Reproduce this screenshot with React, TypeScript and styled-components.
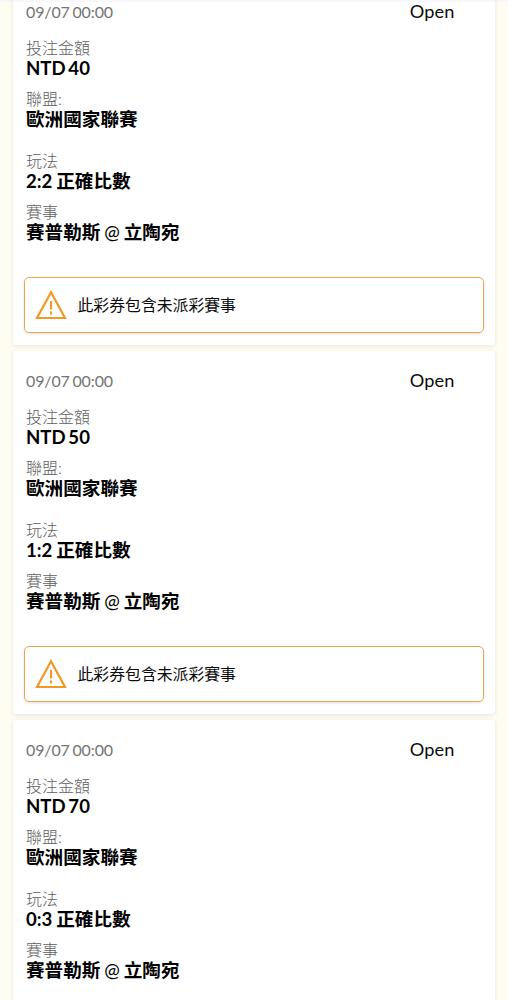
import React from "react";
import styled, { createGlobalStyle } from "styled-components";

const Global = createGlobalStyle`
  * { box-sizing: border-box; }
  html, body { margin: 0; height: 1000px; overflow: hidden; }
  body { background: #fffdf2; font-family: Lato, "Noto Sans CJK TC", sans-serif; color: #0b0b0b; }
`;
const Page = styled.main`
  height: 1000px; overflow: hidden; padding: 0 13px;
  display: flex; flex-direction: column; gap: 6px;
  box-shadow: inset 0 2px 0 #f8f6fb;
`;
const Card = styled.article<{ $first?: boolean }>`
  flex: none; height: 363px; margin-top: ${p => (p.$first ? "-18px" : "0")};
  background: #fff; border-radius: 3px; padding: 20px 11px 0;
  box-shadow: 0 1px 4px rgba(0,0,0,.1);
  ${p => p.$first && "background: linear-gradient(#f9f7fb 20px, #fff 20px);"}
`;
const Head = styled.header`
  display: flex; justify-content: space-between; height: 20px; line-height: 20px;
  padding: 0 30px 0 2px; margin-bottom: 16px;
`;
const Time = styled.time`font-size: 16px; color: #747474; word-spacing: -1.2px; letter-spacing: -0.13px;`;
const Status = styled.span`font-size: 18.2px; line-height: 18px; letter-spacing: 0.1px; margin-right: -0.5px;`;
const Field = styled.div<{ $gap: number }>`
  padding-left: 2px; margin-bottom: ${p => p.$gap}px;
`;
const Label = styled.div`
  font-size: 16px; font-weight: 300; line-height: 20px; height: 20px; color: #606060; white-space: nowrap;
`;
const Value = styled.div<{ $spacing?: number }>`
  font-size: 18.6px; line-height: 20px; height: 20px; font-weight: 700; color: #000;
  white-space: nowrap; word-spacing: ${p => p.$spacing ?? -0.6}px;
`;
const At = styled.span`font-weight: 400;`;
const Notice = styled.div`
  height: 56px; border: 1px solid #eba64f; border-radius: 5px; display: flex; align-items: center;
  gap: 11px; padding-left: 10px; box-shadow: 0 1px 3px rgba(0,0,0,.12);
`;
const NoticeText = styled.span`font-size: 15.85px; line-height: 20px; padding-bottom: 1px; margin-left: -0.5px;`;

const Warning = () => (
  <svg width="32" height="30" viewBox="0 0 32 30" fill="none" stroke="#f09a25" strokeWidth="2.2">
    <path d="M16 2.3 30 28H2Z" />
    <path d="M16 11v8.5M16 21.5v3" />
  </svg>
);

const tickets = [
  { amount: "NTD 40", pick: "2:2 正確比數", notice: "此彩券包含未派彩賽事" },
  { amount: "NTD 50", pick: "1:2 正確比數", notice: "此彩券包含未派彩賽事" },
  { amount: "NTD 70", pick: "0:3 正確比數" },
];

export default function App() {
  return (
    <>
      <Global />
      <Page>
        {tickets.map((t, i) => (
          <Card key={t.amount} $first={i === 0}>
            <Head><Time>09/07 00:00</Time><Status>Open</Status></Head>
            <Field $gap={11}><Label>投注金額</Label><Value $spacing={-1.8}>{t.amount}</Value></Field>
            <Field $gap={22}><Label>聯盟:</Label><Value>歐洲國家聯賽</Value></Field>
            <Field $gap={11}><Label>玩法</Label><Value>{t.pick}</Value></Field>
            <Field $gap={35}><Label>賽事</Label><Value>賽普勒斯 <At>@</At> 立陶宛</Value></Field>
            {t.notice && <Notice><Warning /><NoticeText>{t.notice}</NoticeText></Notice>}
          </Card>
        ))}
      </Page>
    </>
  );
}
